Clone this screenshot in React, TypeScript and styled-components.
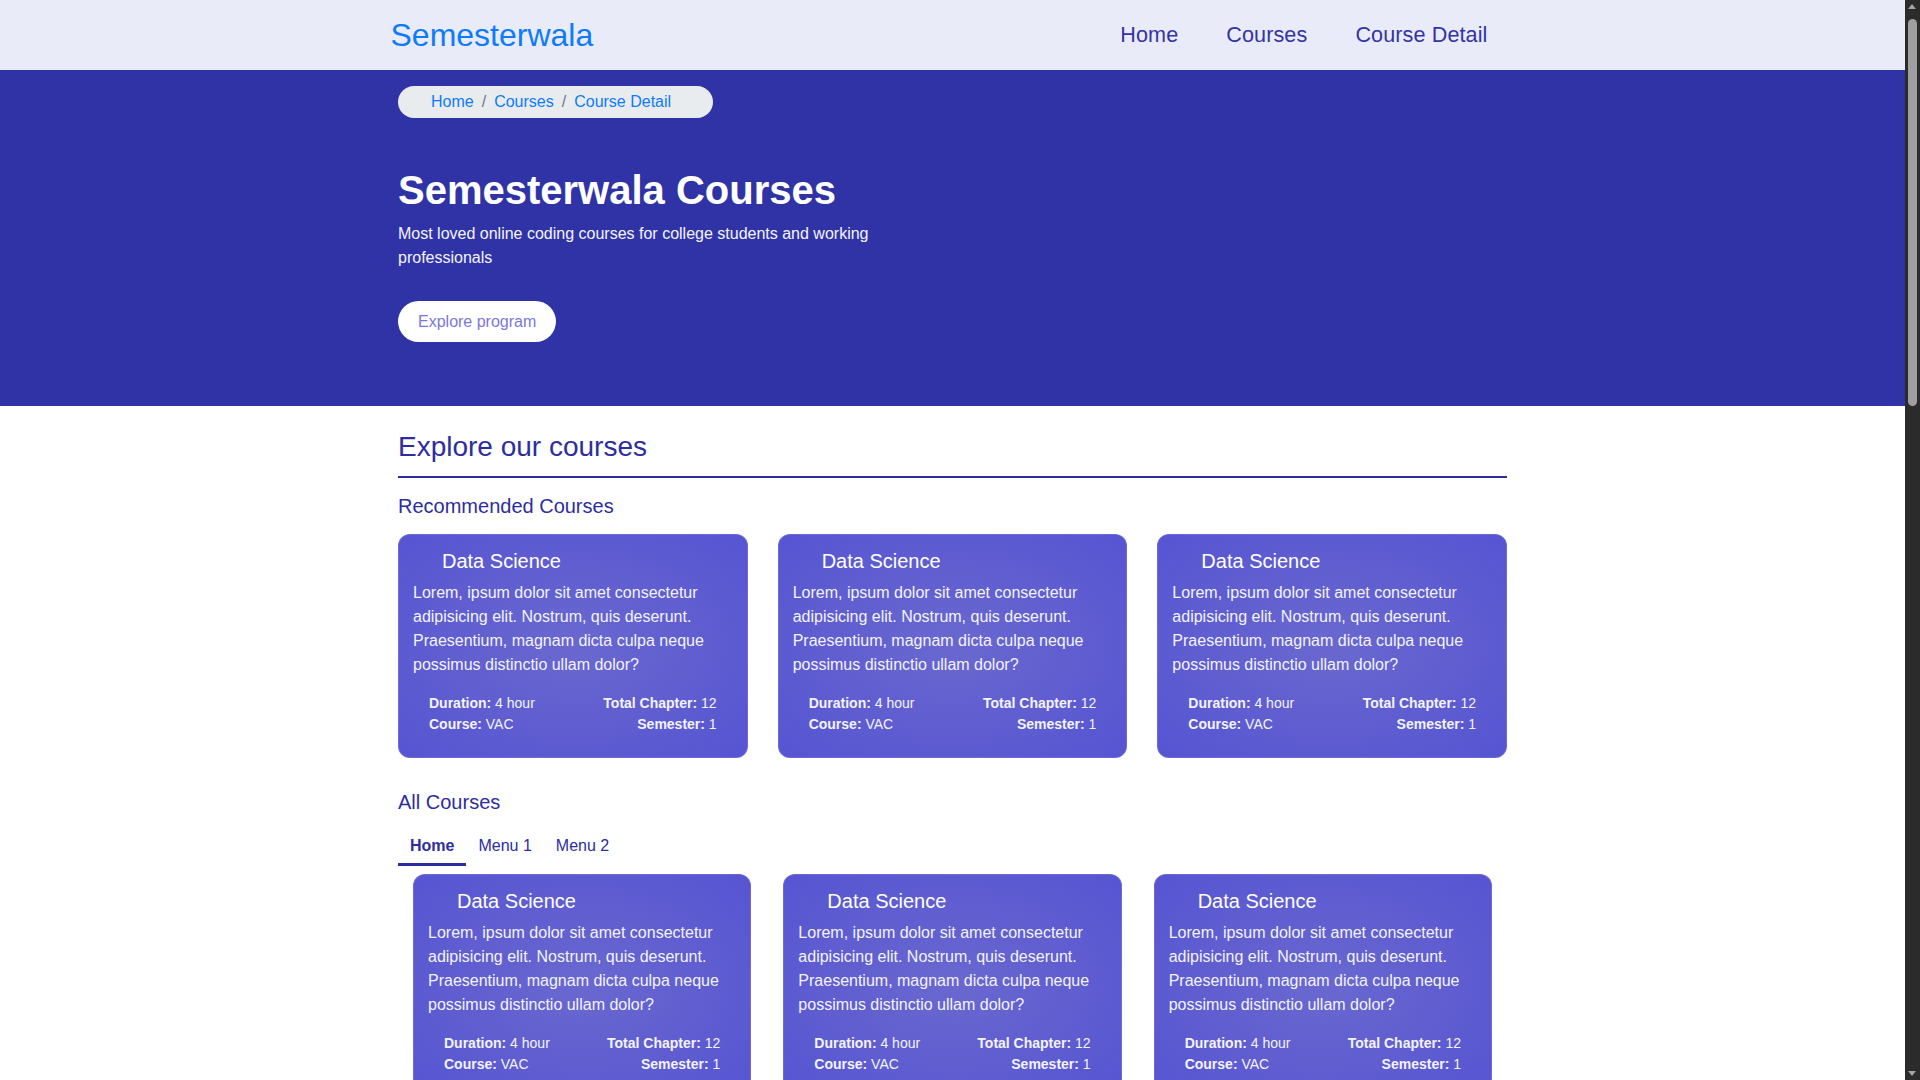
import React from "react";
import styled, { createGlobalStyle } from "styled-components";

const GlobalStyle = createGlobalStyle`
  * { box-sizing: border-box; }
  html, body { margin: 0; padding: 0; }
  body {
    font-family: "Liberation Sans", Arial, Helvetica, sans-serif;
    background: #ffffff;
    color: #212529;
    padding-right: 15px;
  }
`;

const ScrollTrack = styled.div`
  position: fixed;
  top: 0;
  right: 0;
  width: 15px;
  height: 100vh;
  background: #2b2b2b;
  z-index: 10;
`;

const ScrollThumb = styled.div`
  position: absolute;
  left: 3px;
  top: 19px;
  width: 9px;
  height: 387px;
  border-radius: 5px;
  background: #9f9f9f;
`;

const ScrollArrow = styled.div<{ $dir: "up" | "down" }>`
  position: absolute;
  left: 3px;
  width: 0;
  height: 0;
  border-left: 4.5px solid transparent;
  border-right: 4.5px solid transparent;
  ${(p) =>
    p.$dir === "up"
      ? "top: 4px; border-bottom: 5px solid #a3a3a3;"
      : "bottom: 4px; border-top: 5px solid #a3a3a3;"}
`;

const NavBar = styled.header`
  background: #e9ebf9;
  height: 70px;
`;

const NavInner = styled.div`
  max-width: 1126px;
  height: 100%;
  margin: 0 auto;
  display: flex;
  align-items: center;
  justify-content: space-between;
`;

const Brand = styled.a`
  margin-left: 1px;
  font-size: 32px;
  line-height: 1.2;
  color: #0d7bfb;
  text-decoration: none;
`;

const NavLinks = styled.nav`
  display: flex;
  align-items: center;
  margin-right: 4px;
`;

const NavLink = styled.a`
  font-size: 21.6px;
  line-height: 1.2;
  letter-spacing: 0.1px;
  color: #3434a4;
  padding: 0 24px;
  text-decoration: none;
`;

const Hero = styled.section`
  background: #3033a6;
  padding: 16px 0 64px;
`;

const Container = styled.div`
  max-width: 1109px;
  margin: 0 auto;
`;

const Breadcrumb = styled.ol`
  display: inline-flex;
  align-items: center;
  height: 32px;
  margin: 0;
  padding: 0 42px 0 33px;
  list-style: none;
  background: #e9ecef;
  border-radius: 16px;
  font-size: 16px;
  line-height: 24px;
`;

const Crumb = styled.li`
  color: #0d7bfb;
  & + &::before {
    content: "/";
    color: #6c757d;
    padding: 0 8px;
  }
`;

const HeroTitle = styled.h1`
  margin: 48px 0 8px;
  font-size: 40px;
  line-height: 48px;
  font-weight: 700;
  color: #ffffff;
`;

const HeroText = styled.p`
  margin: 0 0 31px;
  max-width: 520px;
  font-size: 16px;
  line-height: 24px;
  color: #f4f4ff;
`;

const HeroButton = styled.a`
  display: inline-block;
  padding: 9px 20px;
  font-size: 16px;
  line-height: 23px;
  border-radius: 21px;
  background: #ffffff;
  color: #7a78de;
  text-decoration: none;
`;

const Main = styled.main`
  padding: 24px 0 56px;
`;

const SectionTitle = styled.h3`
  margin: 0 0 12px;
  font-size: 28px;
  line-height: 1.2;
  font-weight: 400;
  color: #2d2d9f;
`;

const Divider = styled.hr`
  margin: 0 0 16px;
  height: 2px;
  border: 0;
  background: #2d2d9f;
`;

const SubTitle = styled.h5<{ $top?: number; $bottom?: number }>`
  margin: ${(p) => p.$top ?? 0}px 0 ${(p) => p.$bottom ?? 16}px;
  font-size: 20px;
  line-height: 24px;
  font-weight: 400;
  color: #2d2d9f;
`;

const CardGrid = styled.div<{ $gap: number; $inset?: number }>`
  display: grid;
  grid-template-columns: repeat(3, 1fr);
  column-gap: ${(p) => p.$gap}px;
  row-gap: 30px;
  padding: 0 ${(p) => p.$inset ?? 0}px;
`;

const Card = styled.article`
  border-radius: 12px;
  padding: 15px 15px 23.5px;
  color: #ffffff;
  background: radial-gradient(ellipse at center, #6a68cf 0%, #5f5dd0 55%, #5654d2 100%);
  box-shadow: inset 0 0 0 1px rgba(255, 255, 255, 0.12);
`;

const CardTitle = styled.h4`
  margin: 0 0 8px;
  padding-left: 29px;
  font-size: 20px;
  line-height: 24px;
  font-weight: 400;
`;

const CardText = styled.p`
  margin: 0 0 16px;
  font-size: 16px;
  line-height: 24px;
  color: #f3f3ff;
`;

const Meta = styled.div`
  display: flex;
  justify-content: space-between;
  padding: 0 16px;
  font-size: 14px;
  line-height: 21px;
  color: #f3f3ff;
`;

const MetaCol = styled.div<{ $align: "start" | "end" }>`
  display: flex;
  flex-direction: column;
  align-items: ${(p) => (p.$align === "start" ? "flex-start" : "flex-end")};
`;

const Label = styled.b`
  font-weight: 700;
`;

const Tabs = styled.div`
  display: flex;
  margin-top: 11px;
`;

const Tab = styled.a<{ $active?: boolean }>`
  padding: 9px 12px 5px;
  font-size: 16px;
  line-height: 24px;
  color: #2d2d9f;
  font-weight: ${(p) => (p.$active ? 700 : 400)};
  border-bottom: 3px solid ${(p) => (p.$active ? "#2d2d9f" : "transparent")};
  text-decoration: none;
`;

const TabPane = styled.div`
  margin-top: 8px;
`;

const CourseCard: React.FC = () => (
  <Card>
    <CardTitle>Data Science</CardTitle>
    <CardText>
      Lorem, ipsum dolor sit amet consectetur adipisicing elit. Nostrum, quis deserunt.
      Praesentium, magnam dicta culpa neque possimus distinctio ullam dolor?
    </CardText>
    <Meta>
      <MetaCol $align="start">
        <span>
          <Label>Duration:</Label> 4 hour
        </span>
        <span>
          <Label>Course:</Label> VAC
        </span>
      </MetaCol>
      <MetaCol $align="end">
        <span>
          <Label>Total Chapter:</Label> 12
        </span>
        <span>
          <Label>Semester:</Label> 1
        </span>
      </MetaCol>
    </Meta>
  </Card>
);

export default function App() {
  const recommended = [0, 1, 2];
  const all = Array.from({ length: 24 }, (_, i) => i);
  return (
    <>
      <GlobalStyle />
      <ScrollTrack aria-hidden>
        <ScrollArrow $dir="up" />
        <ScrollThumb />
        <ScrollArrow $dir="down" />
      </ScrollTrack>
      <NavBar>
        <NavInner>
          <Brand href="#">Semesterwala</Brand>
          <NavLinks>
            <NavLink href="#">Home</NavLink>
            <NavLink href="#">Courses</NavLink>
            <NavLink href="#">Course Detail</NavLink>
          </NavLinks>
        </NavInner>
      </NavBar>
      <Hero>
        <Container>
          <Breadcrumb>
            <Crumb>Home</Crumb>
            <Crumb>Courses</Crumb>
            <Crumb>Course Detail</Crumb>
          </Breadcrumb>
          <HeroTitle>Semesterwala Courses</HeroTitle>
          <HeroText>
            Most loved online coding courses for college students and working professionals
          </HeroText>
          <HeroButton href="#">Explore program</HeroButton>
        </Container>
      </Hero>
      <Main>
        <Container>
          <SectionTitle>Explore our courses</SectionTitle>
          <Divider />
          <SubTitle>Recommended Courses</SubTitle>
          <CardGrid $gap={30}>
            {recommended.map((i) => (
              <CourseCard key={i} />
            ))}
          </CardGrid>
          <SubTitle $top={31.5} $bottom={0}>
            All Courses
          </SubTitle>
          <Tabs>
            <Tab href="#" $active>
              Home
            </Tab>
            <Tab href="#">Menu 1</Tab>
            <Tab href="#">Menu 2</Tab>
          </Tabs>
          <TabPane>
            <CardGrid $gap={32} $inset={15}>
              {all.map((i) => (
                <CourseCard key={i} />
              ))}
            </CardGrid>
          </TabPane>
        </Container>
      </Main>
    </>
  );
}
